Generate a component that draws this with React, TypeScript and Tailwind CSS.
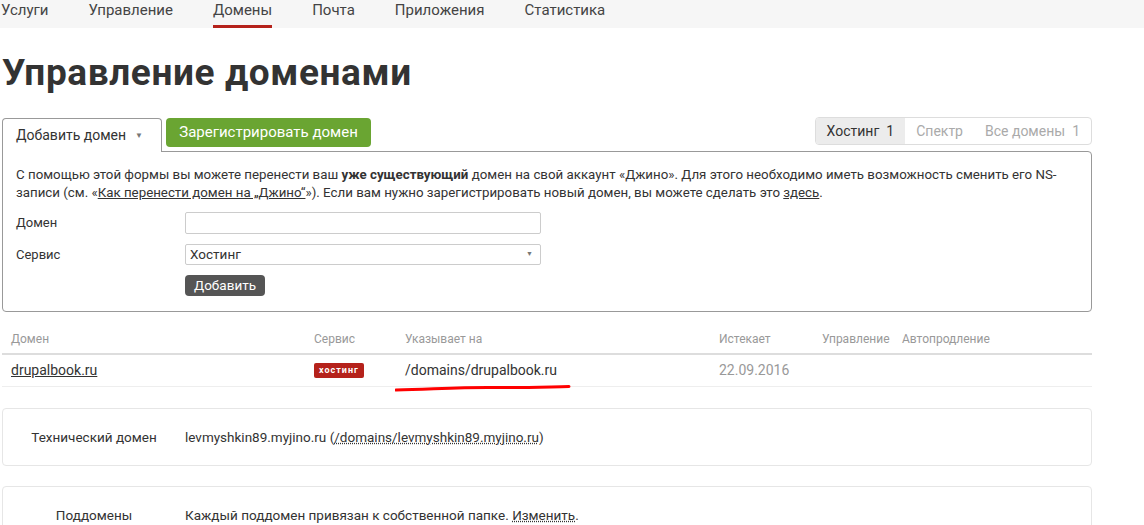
const navItems = ["Услуги", "Управление", "Домены", "Почта", "Приложения", "Статистика"];

const App = () => {
  return (
    <div className="w-[1144px] h-[525px] overflow-hidden bg-white text-[#333] font-['Roboto',sans-serif]">
      {/* top nav */}
      <nav className="h-[28px] bg-[#f6f6f6] flex items-stretch gap-[40px] pl-[1px] text-[15px] text-[#444]">
        {navItems.map((item) => (
          <span
            key={item}
            className={`flex items-center border-b-[3px] pb-[4px] ${
              item === "Домены" ? "border-[#b5221b]" : "border-transparent"
            }`}
          >
            {item}
          </span>
        ))}
      </nav>

      <div className="w-[1090px] ml-[2px]">
        <h1 className="mt-[23px] text-[37px] leading-[44px] font-bold tracking-[0.6px] text-[#333]">
          Управление доменами
        </h1>

        {/* tabs */}
        <div className="mt-[22px] flex items-end">
          <div className="h-[34px] w-[160px] border border-b-0 border-[#999] rounded-t-[4px] bg-white flex items-center pl-[13px] gap-[9px] text-[14px] -mb-px relative z-10">
            <span>Добавить домен</span>
            <span className="text-[8px] text-[#777]">▼</span>
          </div>
          <button className="ml-[4px] mb-[4px] h-[29px] w-[205px] rounded-[4px] bg-[#6aa532] text-white text-[15px] flex items-center justify-center">
            Зарегистрировать домен
          </button>
          <div className="ml-auto mb-[6px] h-[28px] flex border border-[#ddd] rounded-[4px] overflow-hidden text-[14px]">
            <span className="bg-[#ececec] px-[11px] flex items-center gap-[7px] text-[#333]">
              Хостинг <span>1</span>
            </span>
            <span className="px-[11px] flex items-center text-[#aaa]">Спектр</span>
            <span className="px-[11px] flex items-center gap-[7px] text-[#aaa]">
              Все домены <span>1</span>
            </span>
          </div>
        </div>

        {/* add form panel */}
        <div className="border border-[#999] rounded-b-[4px] rounded-tr-[4px] h-[161px] px-[13px] pt-[14px] text-[13px]">
          <p className="leading-[18px] text-[13.3px]">
            С помощью этой формы вы можете перенести ваш <b>уже существующий</b> домен на свой аккаунт «Джино». Для этого необходимо иметь возможность сменить его NS-записи (см. «<span className="underline">Как перенести домен на „Джино“</span>»). Если вам нужно зарегистрировать новый домен, вы можете сделать это <span className="underline">здесь</span>.
          </p>
          <div className="mt-[10px] flex items-center">
            <span className="w-[169px]">Домен</span>
            <div className="w-[356px] h-[22px] border border-[#ccc] rounded-[2px]" />
          </div>
          <div className="mt-[10px] flex items-center">
            <span className="w-[169px]">Сервис</span>
            <div className="w-[356px] h-[21px] border border-[#ccc] rounded-[2px] flex items-center justify-between px-[4px]">
              <span className="text-[13.5px]">Хостинг</span>
              <span className="text-[7px] text-[#777] pr-[3px]">▼</span>
            </div>
          </div>
          <div className="mt-[10px] ml-[169px]">
            <button className="h-[21px] w-[80px] rounded-[4px] bg-[#555] text-white text-[13.5px]">
              Добавить
            </button>
          </div>
        </div>

        {/* table */}
        <div className="mt-[17px] text-[12px]">
          <div className="h-[26px] flex items-center pb-[4px] text-[#999] border-b-2 border-[#ddd]">
            <span className="w-[312px] pl-[9px]">Домен</span>
            <span className="w-[91px]">Сервис</span>
            <span className="w-[314px]">Указывает на</span>
            <span className="w-[103px]">Истекает</span>
            <span className="w-[80px]">Управление</span>
            <span>Автопродление</span>
          </div>
          <div className="h-[32px] flex items-center border-b border-[#eee] text-[14px] relative">
            <span className="w-[312px] pl-[9px] underline">drupalbook.ru</span>
            <span className="w-[91px] flex">
              <span className="inline-flex items-center h-[15px] px-[5px] rounded-[2px] bg-[#b5221b] text-white text-[9px] leading-none font-bold tracking-[1px]">
                хостинг
              </span>
            </span>
            <span className="w-[314px]">/domains/drupalbook.ru</span>
            <span className="w-[103px] text-[#999]">22.09.2016</span>
            <svg className="absolute left-[393px] top-[30px]" width="176" height="8" viewBox="0 0 176 8">
              <path d="M1 5 C 40 4, 70 2, 100 2.5 S 150 2, 174 1.5" stroke="#ff0000" strokeWidth="3" fill="none" strokeLinecap="round" />
            </svg>
          </div>
        </div>

        {/* info cards */}
        <div className="mt-[21px] h-[58px] border border-[#e6e6e6] rounded-[4px] flex items-center text-[13.5px]">
          <span className="w-[182px] text-center">Технический домен</span>
          <span>
            levmyshkin89.myjino.ru (
            <span className="underline decoration-dotted">/domains/levmyshkin89.myjino.ru</span>)
          </span>
        </div>
        <div className="mt-[20px] h-[58px] border border-[#e6e6e6] rounded-[4px] flex items-center text-[13.5px]">
          <span className="w-[182px] text-center">Поддомены</span>
          <span>
            Каждый поддомен привязан к собственной папке.{" "}
            <span className="underline decoration-dotted">Изменить</span>.
          </span>
        </div>
      </div>
    </div>
  );
};

export default App;
